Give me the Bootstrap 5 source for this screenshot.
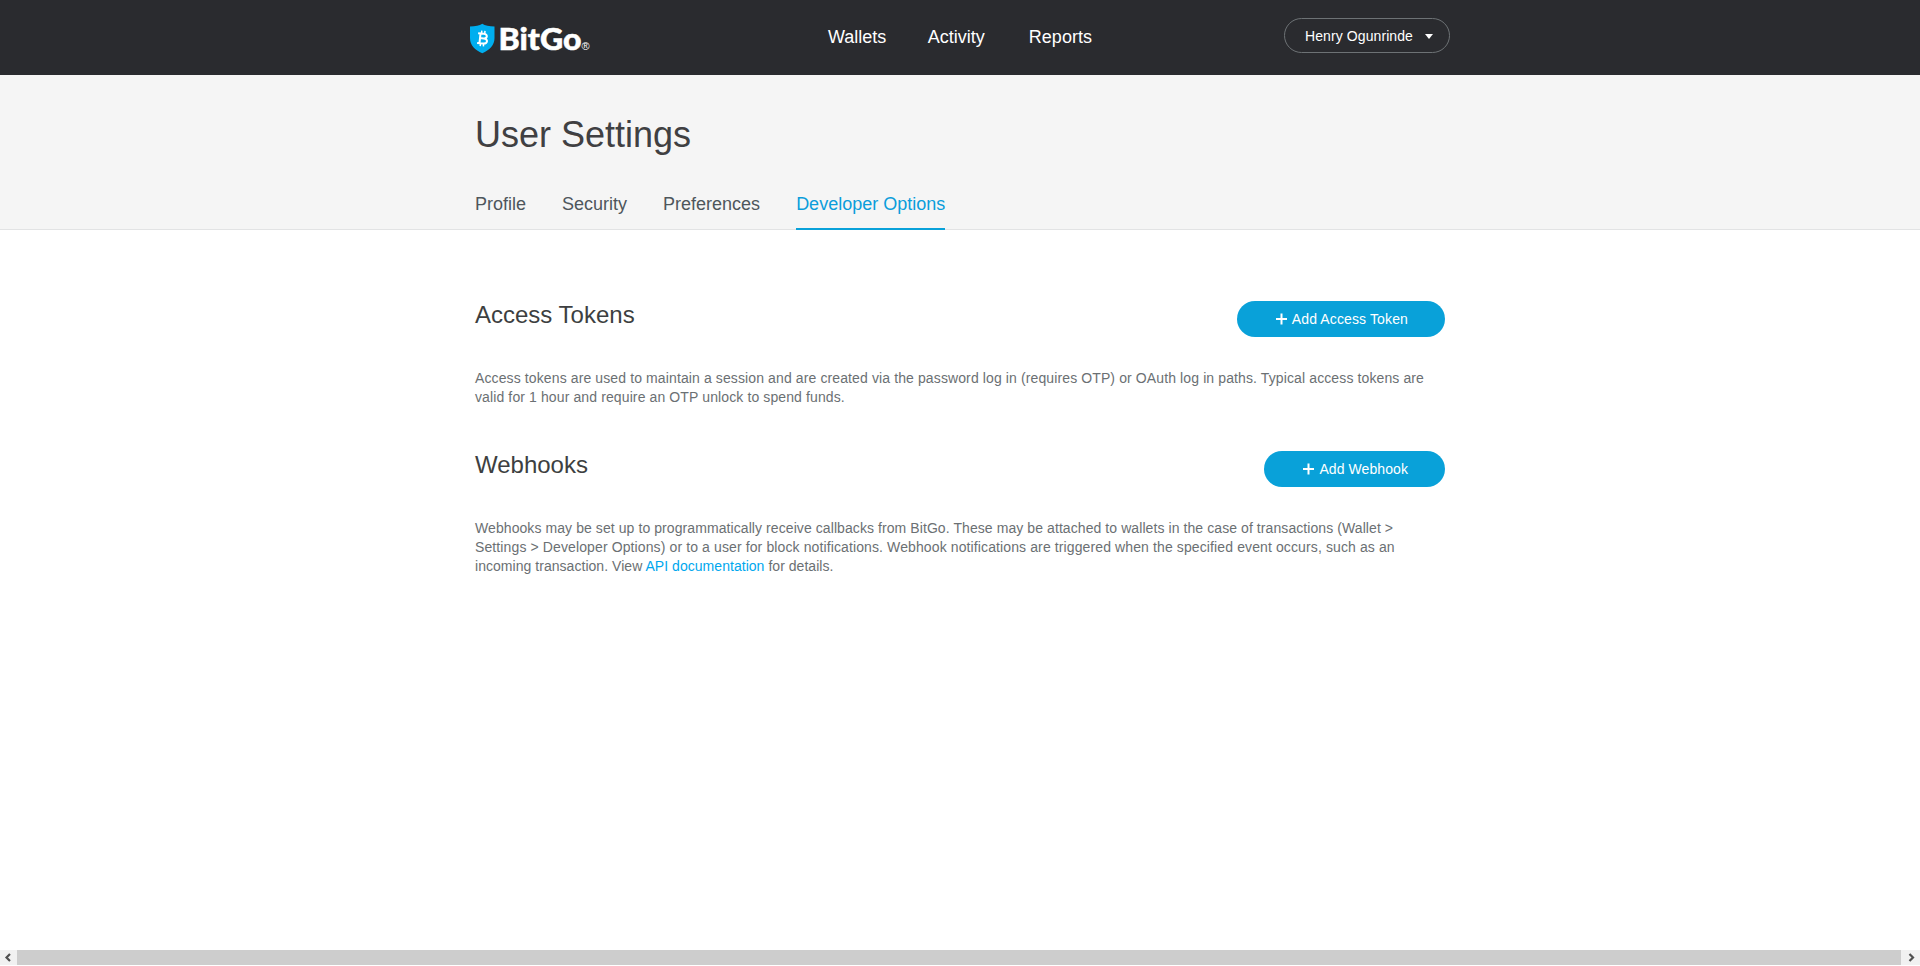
<!DOCTYPE html>
<html lang="en">
<head>
<meta charset="utf-8">
<title>BitGo - User Settings</title>
<link href="https://cdn.jsdelivr.net/npm/bootstrap@5.3.0/dist/css/bootstrap.min.css" rel="stylesheet">
<style>
  body { font-family: "Liberation Sans", Arial, sans-serif; font-size: 14px; line-height: 19px; color: #6b7073; background: #fff; }
  .wrap { width: 970px; }
  .topbar { height: 75px; background: #2a2b2f; }
  .topbar .wrap { width: 980px; height: 75px; }
  .logo { width: 130px; height: 52px; margin-top: 13px; }
  .mainnav { margin: 26px 0 0 228px; font-size: 18px; line-height: 22px; }
  .mainnav a { color: #fff; padding: 0; }
  .mainnav a + a { margin-left: 41.5px; }
  .mainnav a + a + a { margin-left: 44px; }
  .user-btn { width: 166px; height: 35px; margin-top: 18px; padding: 1px 16px 0 20px; font-size: 14px; line-height: 33px; letter-spacing: .09px; color: #fff; border: 1px solid #6d7275; }
  .user-btn::after { border-top-width: 5px; border-left-width: 4.5px; border-right-width: 4.5px; margin: 0; }
  .page-head { height: 155px; background: #f5f5f5; border-bottom: 1px solid #e2e3e4; }
  .page-head h1 { font-size: 36px; line-height: 40px; color: #404042; padding-top: 40px; }
  .tabs { gap: 36px; font-size: 18px; margin-top: 31px; }
  .tabs a { color: #4e565c; padding: 0; line-height: 36px; height: 44px; border-bottom: 2px solid transparent; }
  .tabs a.active { color: #0b9ddb; border-color: #09a1d9; }
  .section-block { height: 150px; }
  .section-block h2 { font-size: 24px; line-height: 28px; color: #3d3f41; }
  .add-btn { height: 36px; background: #09a1d9; color: #fff; font-size: 14px; line-height: 36px; padding: 0 37px 0 39px; border: 0; }
  .token-btn { width: 208px; letter-spacing: .13px; }
  .hook-btn { width: 181px; letter-spacing: .08px; }
  .section-block p { margin: 32px 0 0; }
  .section-block p a { color: #00a7ee; }
  .ls-1 { letter-spacing: .115px; }
  .ls-2 { letter-spacing: .08px; }
  .ls-3 { letter-spacing: .04px; }
  .scroller { height: 15px; margin-bottom: 1px; background: #f1f1f1; }
  .scroller svg { width: 17px; height: 15px; flex: none; }
  .thumb { background: #cdcdcd; }
</style>
</head>
<body class="vh-100 d-flex flex-column overflow-hidden">
<header class="topbar flex-shrink-0">
  <div class="wrap mx-auto d-flex align-items-start">
    <a href="#" class="d-flex" aria-label="BitGo">
      <svg class="logo" viewBox="0 -10 130 52">
        <path d="M12.300 .8C9.500 2.800 5.300 3.300 0 3.500V15C0 22.500 5 27 12.300 30.200C19.500 27 24.500 22.500 24.500 15V3.500C19.200 3.300 15 2.800 12.300 .8Z" fill="#00aeef"/>
        <g transform="translate(12.600 15.500) rotate(6)" fill="none" stroke="#fff" stroke-width="2">
          <path d="M-5 -4.800H.8C5.200 -4.800 4.800 -.2 1 -.2H-2.500M1 -.2C6 -.2 5.800 5 .8 5H-5M-2.600 -4.800V5"/>
          <path d="M-1.600 -7.800V-4.800M1.600 -7.800V-4.800M-1.600 5V7.800M1.600 5V7.800" stroke-width="1.500"/>
        </g>
        <text x="28.500" y="27" font-family="Lato, sans-serif" font-weight="900" font-size="30.500" textLength="83" lengthAdjust="spacingAndGlyphs" fill="#fff" stroke="#fff" stroke-width=".5">BitGo</text>
        <text x="111.500" y="27" font-family="Liberation Sans, sans-serif" font-size="11" fill="#fff">®</text>
      </svg>
    </a>
    <nav class="mainnav nav">
      <a class="nav-link" href="#">Wallets</a>
      <a class="nav-link" href="#">Activity</a>
      <a class="nav-link" href="#">Reports</a>
    </nav>
    <button class="user-btn btn rounded-pill dropdown-toggle ms-auto d-flex align-items-center justify-content-between">Henry Ogunrinde</button>
  </div>
</header>
<div class="page-head flex-shrink-0">
  <div class="wrap mx-auto">
    <h1 class="m-0 fw-normal">User Settings</h1>
    <nav class="tabs nav">
      <a class="nav-link" href="#">Profile</a>
      <a class="nav-link" href="#">Security</a>
      <a class="nav-link" href="#">Preferences</a>
      <a class="nav-link active" href="#">Developer Options</a>
    </nav>
  </div>
</div>
<main class="wrap mx-auto flex-grow-1" style="padding-top:71px">
  <section class="section-block">
    <div class="d-flex justify-content-between align-items-start">
      <h2 class="m-0 fw-normal">Access Tokens</h2>
      <button class="add-btn token-btn btn rounded-pill d-flex align-items-center justify-content-between text-nowrap"><svg width="11" height="12" viewBox="0 0 11 12"><path d="M0 6H11M5.500 .5V11.500" stroke="#fff" stroke-width="2"/></svg>Add Access Token</button>
    </div>
    <p><span class="ls-1">Access tokens are used to maintain a session and are created via the password log in (requires OTP) or OAuth log in paths. Typical access tokens are<br>valid for 1 hour and require an OTP unlock to spend funds.</span></p>
  </section>
  <section class="section-block">
    <div class="d-flex justify-content-between align-items-start">
      <h2 class="m-0 fw-normal">Webhooks</h2>
      <button class="add-btn hook-btn btn rounded-pill d-flex align-items-center justify-content-between text-nowrap"><svg width="11" height="12" viewBox="0 0 11 12"><path d="M0 6H11M5.500 .5V11.500" stroke="#fff" stroke-width="2"/></svg>Add Webhook</button>
    </div>
    <p><span class="ls-2">Webhooks may be set up to programmatically receive callbacks from BitGo. These may be attached to wallets in the case of transactions (Wallet &gt;</span><br><span class="ls-1">Settings &gt; Developer Options) or to a user for block notifications. Webhook notifications are triggered when the specified event occurs, such as an</span><br><span class="ls-3">incoming transaction. View <a href="#" class="text-decoration-none">API documentation</a> for details.</span></p>
  </section>
</main>
<div class="scroller d-flex flex-shrink-0">
  <svg viewBox="0 0 17 15"><path d="M10 4L6.500 7.500L10 11" fill="none" stroke="#505050" stroke-width="2.200"/></svg>
  <div class="thumb flex-grow-1"></div>
  <svg viewBox="0 0 17 15" style="margin-right:2px"><path d="M8.500 4L12 7.500L8.500 11" fill="none" stroke="#505050" stroke-width="2.200"/></svg>
</div>
<script src="https://cdn.jsdelivr.net/npm/bootstrap@5.3.0/dist/js/bootstrap.bundle.min.js"></script>
</body>
</html>
